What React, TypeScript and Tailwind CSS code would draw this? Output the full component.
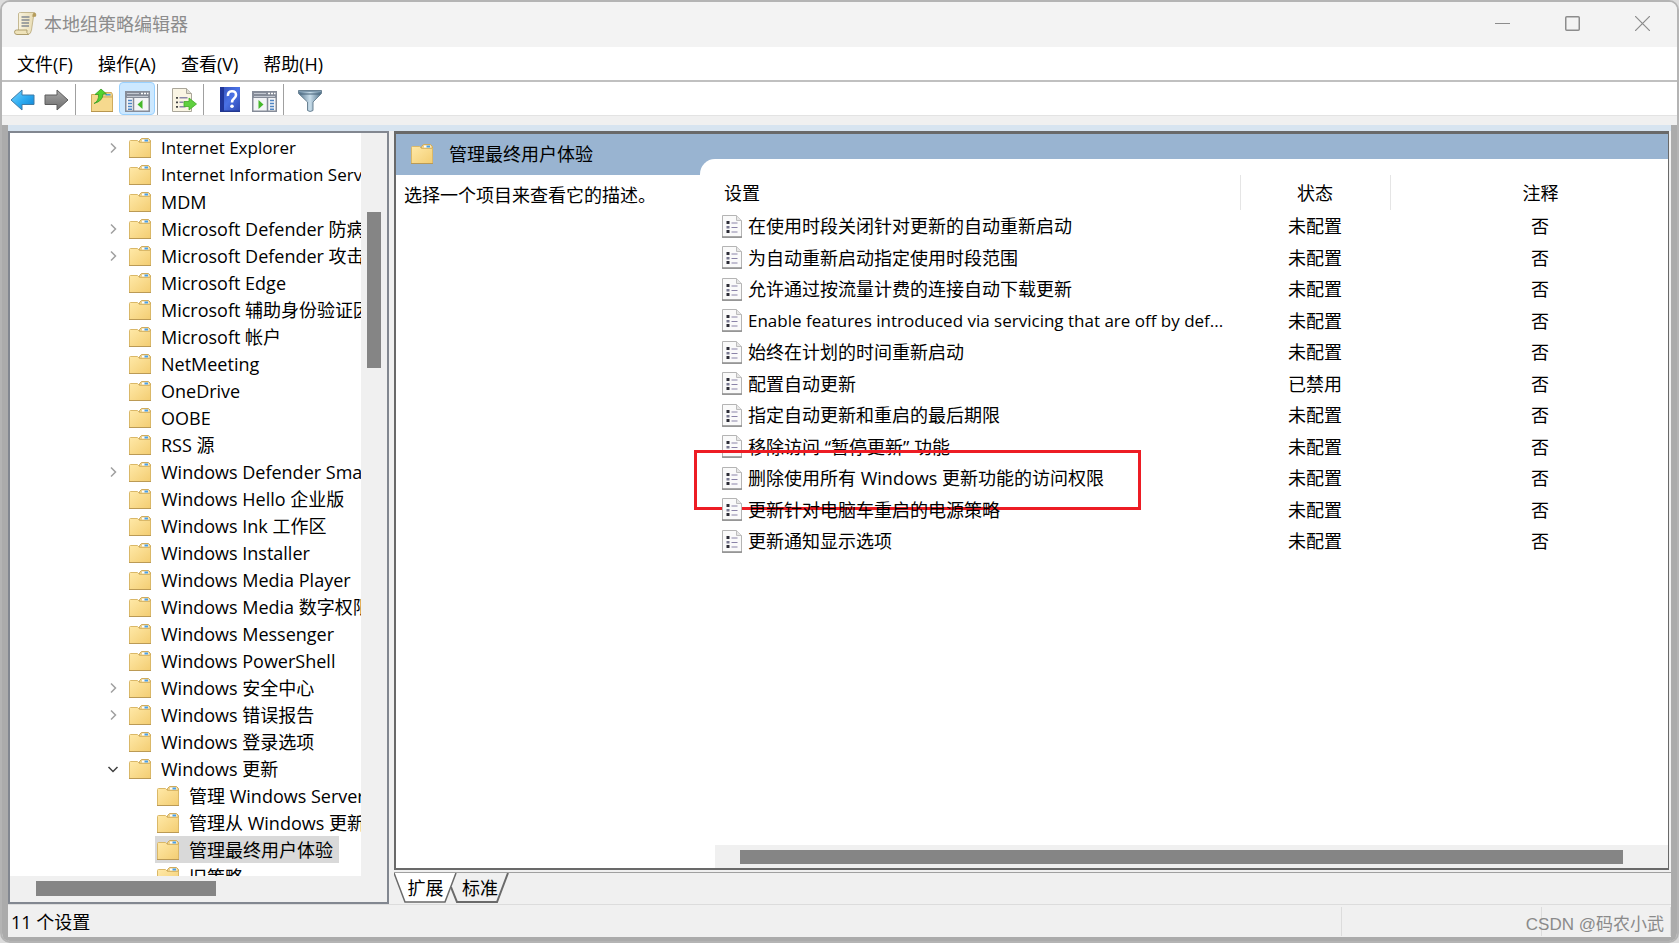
import { ReactNode } from 'react'
import clsx from 'clsx'

type TreeNode = {
  name: string
  state?: 'open' | 'closed'
  child?: boolean
  selected?: boolean
  latin?: boolean
}

const tree: TreeNode[] = [
  { name: 'Internet Explorer', state: 'closed', latin: true },
  { name: 'Internet Information Serv', latin: true },
  { name: 'MDM' },
  { name: 'Microsoft Defender 防病', state: 'closed' },
  { name: 'Microsoft Defender 攻击', state: 'closed' },
  { name: 'Microsoft Edge' },
  { name: 'Microsoft 辅助身份验证因' },
  { name: 'Microsoft 帐户' },
  { name: 'NetMeeting' },
  { name: 'OneDrive' },
  { name: 'OOBE' },
  { name: 'RSS 源' },
  { name: 'Windows Defender Sma', state: 'closed' },
  { name: 'Windows Hello 企业版' },
  { name: 'Windows Ink 工作区' },
  { name: 'Windows Installer' },
  { name: 'Windows Media Player' },
  { name: 'Windows Media 数字权限' },
  { name: 'Windows Messenger' },
  { name: 'Windows PowerShell' },
  { name: 'Windows 安全中心', state: 'closed' },
  { name: 'Windows 错误报告', state: 'closed' },
  { name: 'Windows 登录选项' },
  { name: 'Windows 更新', state: 'open' },
  { name: '管理 Windows Server', child: true },
  { name: '管理从 Windows 更新', child: true },
  { name: '管理最终用户体验', child: true, selected: true },
  { name: '旧策略', child: true },
]

const settings = [
  { name: '在使用时段关闭针对更新的自动重新启动', status: '未配置', comment: '否' },
  { name: '为自动重新启动指定使用时段范围', status: '未配置', comment: '否' },
  { name: '允许通过按流量计费的连接自动下载更新', status: '未配置', comment: '否' },
  { name: 'Enable features introduced via servicing that are off by def...', status: '未配置', comment: '否', latin: true },
  { name: '始终在计划的时间重新启动', status: '未配置', comment: '否' },
  { name: '配置自动更新', status: '已禁用', comment: '否' },
  { name: '指定自动更新和重启的最后期限', status: '未配置', comment: '否' },
  { name: '移除访问 “暂停更新” 功能', status: '未配置', comment: '否' },
  { name: '删除使用所有 Windows 更新功能的访问权限', status: '未配置', comment: '否', marked: true },
  { name: '更新针对电脑车重启的电源策略', status: '未配置', comment: '否' },
  { name: '更新通知显示选项', status: '未配置', comment: '否' },
]

const menus = ['文件(F)', '操作(A)', '查看(V)', '帮助(H)']

function FolderIcon() {
  return (
    <svg width="22" height="20" viewBox="0 0 22 20" className="shrink-0">
      <defs>
        <linearGradient id="folder" x1="0" y1="0" x2="1" y2="1">
          <stop offset="0" stopColor="#ffe9a8" />
          <stop offset="1" stopColor="#f3cd72" />
        </linearGradient>
      </defs>
      <path d="M10.500 5V2.500L12.500 .5H19.500L21.500 2.500V8H10.500Z" fill="#ecd08a" stroke="#cfab5c" />
      <rect x="13" y="1.500" width="6.500" height="2" fill="#fff" />
      <rect x="15.500" y="1.500" width="3.500" height="2" fill="#4aa0e6" />
      <path d="M.5 3.500Q.5 2.500 1.500 2.500H8.500L10.500 4.500H21.500V19.500H.5Z" fill="url(#folder)" stroke="#dab868" />
      <path d="M0 19.500H22" stroke="#bb9a55" />
    </svg>
  )
}

function PolicyIcon() {
  return (
    <svg width="20" height="23" viewBox="0 0 20 23" className="shrink-0">
      <path d="M.5 .5H14.500L19.500 5.500V22.500H.5Z" fill="#fafafa" stroke="#b4b4b4" />
      <path d="M14.500 .5V5.500H19.500" fill="#e6e6e6" stroke="#bdbdbd" />
      <path d="M0 22H20" stroke="#8d8d8d" strokeWidth="1.500" />
      <path d="M4.500 6h3v3h-3zM4.500 15h3v3h-3z" fill="#2b2b35" />
      <path d="M4.500 11h3v2.500h-3z" fill="#77778f" />
      <path d="M9.500 8H15.500M9.500 12.500H15.500M9.500 17H15.500" stroke="#8a83a8" strokeWidth="1.200" />
    </svg>
  )
}

function ScrollIcon() {
  return (
    <svg width="23" height="23" viewBox="0 0 23 23">
      <defs>
        <linearGradient id="paper" x1="0" y1="0" x2="1" y2="0">
          <stop offset="0" stopColor="#faf5e2" />
          <stop offset="1" stopColor="#e6d9ae" />
        </linearGradient>
      </defs>
      <path d="M4.500 1.500Q5 .5 6.500 .5H20Q22 .8 22 3.500L19.500 4.500L17.500 18Q17 22 14 22.500H3Q5 20 4.500 17Z" fill="url(#paper)" stroke="#b9aa7c" strokeWidth=".8" />
      <path d="M18.500 5Q18 1.500 20.200 .8Q22.300 1 22 4.500Z" fill="#b59c5c" />
      <path d="M7.500 5H15.500M7.500 8H15.500M7.500 11H15M7.500 14H15" stroke="#848a92" strokeWidth="1.300" />
      <path d="M2.500 18H13Q12 20.500 14.500 22.500H3Q.5 22.500 .5 20.200T2.500 18Z" fill="#efe3ba" stroke="#a89765" strokeWidth=".9" />
    </svg>
  )
}

function BackIcon() {
  return (
    <svg width="25" height="22" viewBox="0 0 25 22">
      <defs>
        <linearGradient id="back" x1="0" y1="0" x2="1" y2="1">
          <stop offset="0" stopColor="#7ad6ff" />
          <stop offset=".5" stopColor="#2fadf2" />
          <stop offset="1" stopColor="#0a7fd0" />
        </linearGradient>
      </defs>
      <path d="M1 11L12 1V6H24V15.500H12V21Z" fill="url(#back)" stroke="#3f7ba6" strokeLinejoin="round" />
    </svg>
  )
}

function ForwardIcon() {
  return (
    <svg width="25" height="22" viewBox="0 0 25 22">
      <defs>
        <linearGradient id="forward" x1="0" y1="0" x2="0" y2="1">
          <stop offset="0" stopColor="#a8a8a8" />
          <stop offset="1" stopColor="#6c6c6c" />
        </linearGradient>
      </defs>
      <path d="M24 11L13 1V6H1V15.500H13V21Z" fill="url(#forward)" stroke="#5c5c5c" strokeLinejoin="round" />
    </svg>
  )
}

function UpFolderIcon() {
  return (
    <svg width="22" height="24" viewBox="0 0 22 24">
      <path d="M11 8L12.500 4.500H20.500L21.500 6.500V10H11Z" fill="#ecd08a" stroke="#cfab5c" />
      <rect x="14.500" y="6" width="5" height="1.500" fill="#4aa0e6" />
      <path d="M.5 6.500H9L11 9H21.500V23.500H.5Z" fill="#f6d98e" stroke="#cfab5c" />
      <path d="M0 23.500H22" stroke="#b8964f" />
      <path d="M3 15.500Q8 13 7.500 6.500H4L10 1L15.500 6H12Q12 13 3 15.500Z" fill="#4fd32f" stroke="#3a9c25" strokeWidth=".8" />
    </svg>
  )
}

function PaneIcon({ flip }: { flip?: boolean }) {
  return (
    <svg width="25" height="21" viewBox="0 0 25 21" className="mt-[4px]">
      <rect x=".75" y=".75" width="23.500" height="19.500" fill="#f4f5f7" stroke="#868c98" strokeWidth="1.500" />
      <rect x="1" y="1" width="23" height="6" fill="#868c98" />
      <path d="M2 2.500H14M2 5.500H23" stroke="#c4c9d2" />
      <path d="M16 2.500h2M19 2.500h2M22 2.500h1.500" stroke="#fff" strokeWidth="1.500" />
      {flip ? (
        <>
          <path d="M15.500 7V20" stroke="#868c98" strokeWidth="1.500" />
          <path d="M18 9.500h4M18 12.500h4M18 15.500h4M18 18.300h4" stroke="#4f86c4" strokeWidth="1.500" />
          <path d="M6.500 9L11.500 13.500L6.500 18Z" fill="#45b82a" />
        </>
      ) : (
        <>
          <path d="M8.500 7V20" stroke="#868c98" strokeWidth="1.500" />
          <path d="M3 9.500h4M3 12.500h4M3 15.500h4M3 18.300h4" stroke="#4f86c4" strokeWidth="1.500" />
          <path d="M17.500 9L12.500 13.500L17.500 18Z" fill="#45b82a" />
        </>
      )}
    </svg>
  )
}

function ExportIcon() {
  return (
    <svg width="25" height="24" viewBox="0 0 25 24">
      <path d="M.5 .5H14.500L19.500 5.500V23.500H.5Z" fill="#faf5e4" stroke="#aaa69a" />
      <path d="M14.500 .5V5.500H19.500" fill="#dddbd2" stroke="#aaa69a" />
      <path d="M4 9.800h2M4 14.300h2M4 18.800h2" stroke="#444" strokeWidth="1.700" />
      <path d="M7.500 9.800h8M7.500 14.300h4M7.500 18.800h6" stroke="#8b87a8" strokeWidth="1.500" />
      <path d="M12 13.500H17V10L24.500 16L17 22V18.500H12Z" fill="#5fd03f" stroke="#43ab28" strokeWidth=".8" />
    </svg>
  )
}

function HelpIcon() {
  return (
    <svg width="20" height="25" viewBox="0 0 20 25">
      <defs>
        <linearGradient id="book" x1="0" y1="0" x2="1" y2="1">
          <stop offset="0" stopColor="#3450b8" />
          <stop offset=".5" stopColor="#4a72e6" />
          <stop offset="1" stopColor="#2c46ae" />
        </linearGradient>
      </defs>
      <rect width="20" height="25" fill="url(#book)" />
      <rect width="4" height="25" fill="#21379a" />
      <rect y="23.500" width="20" height="1.500" fill="#22378f" />
      <path d="M8 9Q7.500 4.500 11.800 4.300T16 8Q16 10 14 11.500T12 15.500" fill="none" stroke="#fff" strokeWidth="2.600" />
      <circle cx="12" cy="19.300" r="1.800" fill="#fff" />
    </svg>
  )
}

function FilterIcon() {
  return (
    <svg width="24" height="22" viewBox="0 0 24 22" className="mt-[2px]">
      <defs>
        <linearGradient id="funnel" x1="0" y1="0" x2="1" y2="0">
          <stop offset="0" stopColor="#54758f" />
          <stop offset=".5" stopColor="#c9deeb" />
          <stop offset="1" stopColor="#4f7088" />
        </linearGradient>
      </defs>
      <path d="M.5 .5H23.500V3.500L15 12V20.500Q12 22.500 9.500 20.500V12L.5 3.500Z" fill="url(#funnel)" stroke="#6b8394" />
      <path d="M1 1.500H23" stroke="#7f9bb0" />
      <path d="M2 4H22" stroke="#49657a" />
    </svg>
  )
}

function ToolButton({ label, active, children }: { label: string; active?: boolean; children: ReactNode }) {
  return (
    <button
      aria-label={label}
      className={clsx(
        'flex items-center justify-center rounded-sm pt-[2px]',
        active ? 'w-9 border border-[#99d1ff] bg-[#cce8ff]' : 'w-[34px]'
      )}
    >
      {children}
    </button>
  )
}

function Separator() {
  return <div className="ml-[2px] mr-[9px] mt-[2px] w-px bg-[#a0a0a0]" />
}

function TreeRow({ node }: { node: TreeNode }) {
  return (
    <li className={clsx('flex h-[27px] items-center', node.child ? 'pl-[145px]' : 'pl-[93px]')}>
      {!node.child && (
        <span className="flex w-[24px] shrink-0">
          {node.state && (
            <button aria-label={node.name} aria-expanded={node.state === 'open'} className="p-1">
              <svg width="12" height="12" viewBox="0 0 12 12" fill="none" strokeWidth="1.500">
                {node.state === 'open' ? (
                  <path d="M1.500 4L6 8.500L10.500 4" stroke="#404040" />
                ) : (
                  <path d="M4 1.500L8.500 6L4 10.500" stroke="#a0a0a0" />
                )}
              </svg>
            </button>
          )}
        </span>
      )}
      <button
        className={clsx(
          'flex h-full items-center gap-[10px] whitespace-nowrap pl-[2px] pr-[6px]',
          node.selected && 'bg-[#d9d9d9]',
          node.latin && 'text-[17px]'
        )}
      >
        <FolderIcon />
        {node.name}
      </button>
    </li>
  )
}

function ConsoleTree() {
  return (
    <nav className="flex w-[381px] shrink-0 flex-col border-2 border-[#828790] bg-[#f0f0f0]">
      <div className="flex min-h-0 flex-1">
        <ul className="min-w-0 flex-1 overflow-hidden bg-white pt-px">
          {tree.map((node) => (
            <TreeRow key={node.name} node={node} />
          ))}
        </ul>
        <div className="w-[26px] pl-[6px] pt-[79px]">
          <div className="h-[156px] w-[14px] bg-[#858585]" />
        </div>
      </div>
      <div className="h-[26px] pl-[26px] pt-[5px]">
        <div className="h-[15px] w-[180px] bg-[#858585]" />
      </div>
    </nav>
  )
}

function SettingsTable() {
  return (
    <table className="w-full table-fixed">
      <thead>
        <tr className="h-[35px]">
          <th className="w-[525px] border-r border-[#e5e5e5] pl-[9px] text-left font-normal">设置</th>
          <th className="w-[150px] border-r border-[#e5e5e5] font-normal">状态</th>
          <th className="font-normal">
            <span className="block w-[300px]">注释</span>
          </th>
        </tr>
      </thead>
      <tbody>
        {settings.map((item) => (
          <tr key={item.name} className="odd:h-8 even:h-[31px]">
            <td>
              <div className="relative flex items-center gap-[6px] whitespace-nowrap pl-[7px]">
                <PolicyIcon />
                <span className={clsx(item.latin && 'text-[17px]')}>{item.name}</span>
                {item.marked && (
                  <div className="absolute -left-[21px] -top-[15px] h-[60px] w-[447px] border-3 border-[#ed1c24]" />
                )}
              </div>
            </td>
            <td className="text-center">{item.status}</td>
            <td>
              <span className="block w-[300px] text-center">{item.comment}</span>
            </td>
          </tr>
        ))}
      </tbody>
    </table>
  )
}

function ResultPane() {
  return (
    <section className="mr-[2px] mb-[2px] flex min-h-0 flex-1 flex-col border-2 border-t-3 border-r border-[#696969] bg-white">
      <div className="flex h-[41px] shrink-0">
        <div className="flex w-[304px] items-center gap-4 bg-[#99b4d1] pb-[2px] pl-[15px]">
          <FolderIcon />
          <h1>管理最终用户体验</h1>
        </div>
        <div className="flex flex-1 flex-col bg-[#99b4d1]">
          <div className="h-[25px]" />
          <div className="flex-1 rounded-tl-[15px] bg-white" />
        </div>
      </div>
      <div className="flex min-h-0 flex-1">
        <p className="w-[319px] shrink-0 pl-[8px] pt-[7px]">选择一个项目来查看它的描述。</p>
        <div className="flex min-w-0 flex-1 flex-col">
          <SettingsTable />
          <div className="mt-auto h-[23px] bg-[#f0f0f0] pl-[25px] pr-[45px] pt-[5px]">
            <div className="h-[14px] bg-[#858585]" />
          </div>
        </div>
      </div>
    </section>
  )
}

function ViewTabs() {
  return (
    <div className="flex h-8 shrink-0 border-t border-[#a0a0a0] pb-[2px]">
      <button className="relative h-[30px] w-[61px] pl-[2px]">
        <svg width="64" height="30" viewBox="0 0 64 30" className="absolute left-0 top-0">
          <path d="M0 0L11 29H51L62 0Z" fill="#fff" />
          <path d="M0 0L11 29H51L62 0" fill="none" stroke="#6a6a6a" strokeWidth="1.500" />
        </svg>
        <span className="relative">扩展</span>
      </button>
      <button className="relative h-[30px] w-[50px]">
        <svg width="58" height="30" viewBox="0 0 58 30" className="absolute -left-1 top-0">
          <path d="M0 14L6 29H46L57 0" fill="none" stroke="#6a6a6a" strokeWidth="2" />
        </svg>
        <span className="relative">标准</span>
      </button>
    </div>
  )
}

export default function App() {
  return (
    <div className="h-screen bg-[#dcdcdc] font-['Open_Sans','Noto_Sans_CJK_SC',sans-serif] text-[18px] leading-[26px] text-black">
      <div className="flex h-full flex-col overflow-hidden rounded-[10px] border-2 border-[#b4b4b4] bg-[#f0f0f0]">
        <header className="flex h-[45px] shrink-0 items-center bg-[#f3f3f3] pl-3 pb-[2px] text-[#8c8c8c]">
          <ScrollIcon />
          <span className="ml-[7px] flex-1">本地组策略编辑器</span>
          <button aria-label="最小化" className="flex h-full w-[70px] items-center justify-center">
            <svg width="15" height="15" stroke="#8c8c8c">
              <path d="M0 7.500H15" />
            </svg>
          </button>
          <button aria-label="最大化" className="flex h-full w-[70px] items-center justify-center">
            <svg width="15" height="15" fill="none" stroke="#8c8c8c">
              <rect x=".75" y=".75" width="13.500" height="13.500" rx="1" strokeWidth="1.500" />
            </svg>
          </button>
          <button aria-label="关闭" className="flex h-full w-[70px] items-center justify-center">
            <svg width="15" height="15" stroke="#8c8c8c" strokeWidth="1.200">
              <path d="M0 0L15 15M15 0L0 15" />
            </svg>
          </button>
        </header>

        <div className="flex h-[35px] shrink-0 items-center gap-[25px] border-b-2 border-[#c0c0c0] bg-white pl-[15px]">
          {menus.map((menu) => (
            <button key={menu}>{menu}</button>
          ))}
        </div>

        <div className="flex h-[34px] shrink-0 border-b border-[#e3e3e3] bg-white pl-[3px]">
          <ToolButton label="后退"><BackIcon /></ToolButton>
          <ToolButton label="前进"><ForwardIcon /></ToolButton>
          <Separator />
          <ToolButton label="上一级"><UpFolderIcon /></ToolButton>
          <ToolButton label="显示/隐藏控制台树" active><PaneIcon /></ToolButton>
          <Separator />
          <ToolButton label="导出列表"><ExportIcon /></ToolButton>
          <Separator />
          <ToolButton label="帮助"><HelpIcon /></ToolButton>
          <ToolButton label="显示/隐藏操作窗格"><PaneIcon flip /></ToolButton>
          <Separator />
          <ToolButton label="筛选器"><FilterIcon /></ToolButton>
        </div>

        <div className="h-[9px] shrink-0" />

        <div className="flex min-h-0 flex-1 flex-col border-x-6 border-b-4 border-[#ababab]">
          <div className="h-[6px] shrink-0 bg-[#d7e4f0]" />
          <main className="flex min-h-0 flex-1 gap-[5px]">
            <ConsoleTree />
            <div className="flex min-w-0 flex-1 flex-col">
              <ResultPane />
              <ViewTabs />
            </div>
          </main>
          <footer className="flex h-[33px] shrink-0 items-center border-t border-[#dcdcdc] pl-[3px]">
            <span className="flex-1 pt-[2px]">11 个设置</span>
            <div className="h-[29px] w-[200px] border-l border-[#dcdcdc]" />
            <div className="flex h-[29px] w-[130px] items-end justify-end border-x border-[#dcdcdc] pr-[6px]">
              <span className="whitespace-nowrap font-['Liberation_Sans','Noto_Sans_CJK_SC',sans-serif] text-[17px] leading-[22px] text-[#8a8a8a]">
                CSDN @码农小武
              </span>
            </div>
          </footer>
        </div>
      </div>
    </div>
  )
}
